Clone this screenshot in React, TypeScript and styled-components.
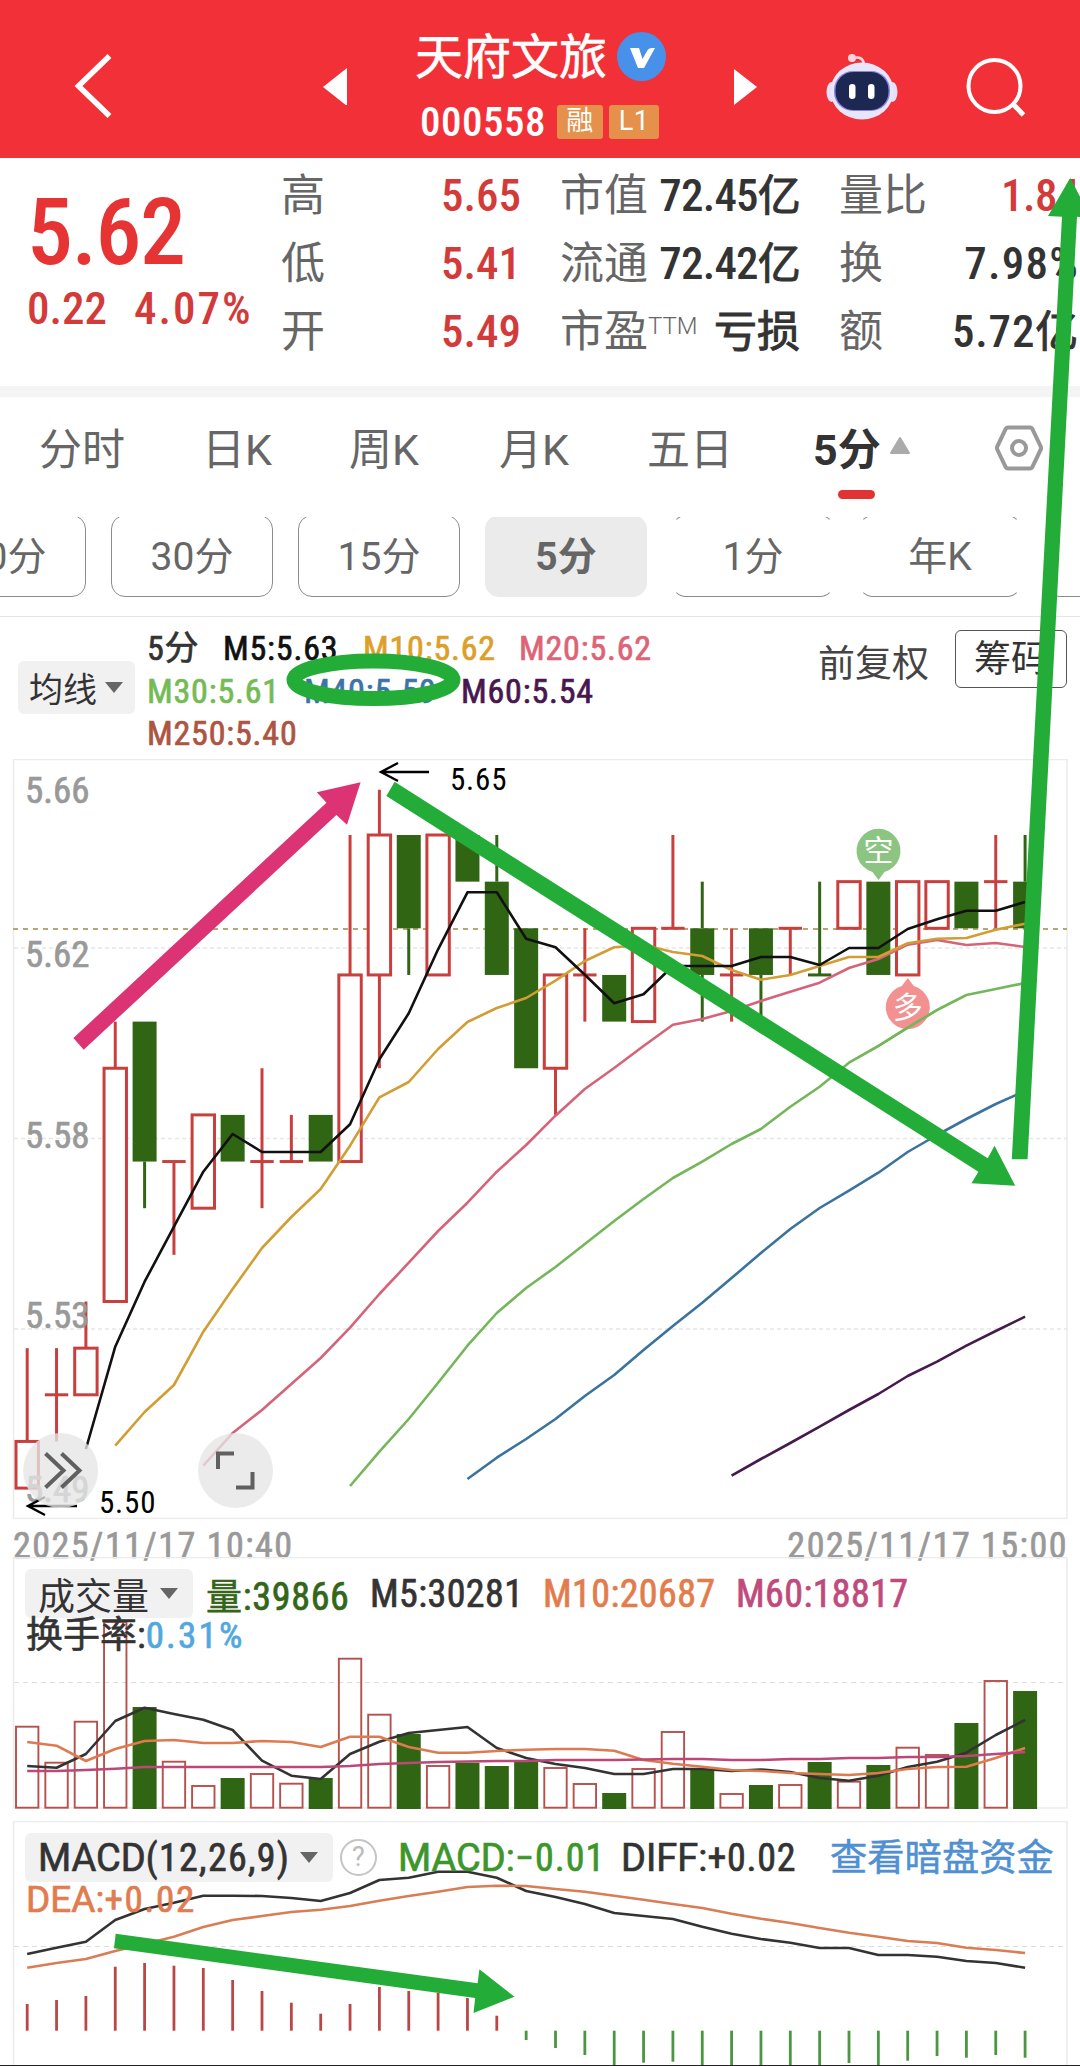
import type { ReactNode } from "react";
import styled, { createGlobalStyle } from "styled-components";

const STEP = 29.35;
const cx = (i: number) => 27.2 + i * STEP;
const level = (l: number) => 835 + l * 46.65;

const RED = "#c93f3d";
const GREEN = "#306514";

// [up, bodyTop, bodyBottom, high, low] in price ticks below 5.65
const candles: [number, number, number, number, number][] = [
  [1, 13, 14, 11, 14],
  [1, 12, 12, 11, 13],
  [1, 11, 12, 10, 12],
  [1, 5, 10, 4, 10],
  [0, 4, 7, 4, 8],
  [1, 7, 7, 7, 9],
  [1, 6, 8, 6, 8],
  [0, 6, 7, 6, 7],
  [1, 7, 7, 5, 8],
  [1, 7, 7, 6, 7],
  [0, 6, 7, 6, 7],
  [1, 3, 7, 0, 7],
  [1, 0, 3, -0.97, 5],
  [0, 0, 2, 0, 3],
  [1, 0, 3, 0, 3],
  [0, 0, 1, 0, 1],
  [0, 1, 3, 0, 3],
  [0, 2, 5, 2, 5],
  [1, 3, 5, 3, 6],
  [1, 3, 3, 2, 4],
  [0, 3, 4, 3, 4],
  [1, 2, 4, 2, 4],
  [1, 2, 2, 0, 2],
  [0, 2, 3, 1, 4],
  [1, 3, 3, 2, 4],
  [0, 2, 3, 2, 4],
  [1, 2, 2, 2, 3],
  [0, 3, 3, 1, 3],
  [1, 1, 2, 1, 2],
  [0, 1, 3, 1, 3],
  [1, 1, 3, 1, 3],
  [1, 1, 2, 1, 2],
  [0, 1, 2, 1, 2],
  [1, 1, 1, 0, 2],
  [0, 1, 2, 0, 2],
];

const ma5 = [1449, 1346.7, 1281.7, 1226.7, 1171.7, 1134, 1152, 1152, 1152, 1124.3, 1059.3, 1013.3, 949.3, 892.3, 892.3, 938.7, 947.3, 974.7, 1003.3, 994.3, 966, 966, 966, 957, 957, 965, 948, 948, 929, 919.3, 910.7, 910.7, 902];
const ma10 = [1445.7, 1412, 1385, 1331.7, 1289, 1248, 1217, 1189, 1145.7, 1097.3, 1082, 1049, 1022, 1008, 998, 980.7, 961, 947.3, 945, 952, 956, 970, 979.7, 975, 966, 957, 957, 943.3, 938.7, 938, 929.7, 923.7];
const ma20 = [1465.7, 1433, 1410, 1384, 1358, 1327.7, 1294, 1262.7, 1231, 1202.7, 1171.7, 1145, 1115.7, 1089, 1068, 1046, 1024.7, 1019, 1011, 1001, 991.7, 982.7, 968, 959, 944.7, 940, 945, 943, 947];
const ma30 = [1486, 1451.7, 1419, 1382.7, 1345.7, 1313, 1288, 1267, 1244, 1221, 1199, 1178, 1161.7, 1144, 1129, 1106.7, 1086.7, 1062.7, 1046, 1027.7, 1010, 995, 989, 983];
const ma40 = [1479, 1457.7, 1439, 1419, 1396, 1375, 1350, 1326, 1302.7, 1278, 1253, 1229, 1208, 1190.7, 1172.7, 1152, 1135, 1119, 1104, 1091];
const ma60 = [1475.7, 1459, 1443, 1426.7, 1410, 1394, 1376, 1361.7, 1345.7, 1331, 1316.7];

const volTop = [1726.7, 1762.7, 1721.7, 1622, 1707, 1761.7, 1786, 1778, 1774, 1783.7, 1778, 1658.7, 1714.7, 1734, 1766, 1762.7, 1766, 1762, 1768, 1784, 1793, 1769, 1732, 1770, 1794, 1785, 1785, 1762, 1781.7, 1765, 1747.7, 1755, 1723, 1681, 1691];
const vol5 = [1766, 1767.7, 1754, 1721, 1707.7, 1714, 1719.7, 1730, 1760.7, 1775.7, 1779, 1754, 1741.7, 1733, 1730, 1727, 1748, 1758, 1764, 1768, 1774, 1774, 1769, 1769, 1771, 1769.5, 1772, 1778, 1780.7, 1775.7, 1767, 1761.7, 1752.7, 1735, 1720];
const vol10 = [1742, 1745.7, 1761, 1749, 1741, 1740, 1743, 1743, 1741, 1742, 1747, 1736.7, 1736.7, 1747, 1752.7, 1752.7, 1751, 1749.7, 1749, 1749, 1750.7, 1760, 1763.7, 1766.7, 1770, 1771, 1773, 1774, 1775, 1773, 1769, 1767, 1766.7, 1758, 1748];
const vol60 = [1771, 1771, 1770, 1768.7, 1767, 1767, 1767, 1767, 1767, 1767, 1767, 1766, 1764, 1763, 1762, 1761.5, 1761, 1761, 1760, 1760, 1760, 1759.5, 1759, 1759, 1760, 1760, 1759, 1759, 1758, 1758, 1757, 1757, 1756, 1754, 1752];

const diff = [1954, 1947.7, 1941.7, 1920, 1909, 1902.7, 1895.7, 1895.7, 1896, 1898, 1901, 1893, 1880, 1877.7, 1871.7, 1871.7, 1877.7, 1891, 1897, 1904, 1913, 1916, 1919, 1926.7, 1933.7, 1939, 1942.7, 1948, 1948, 1955, 1955, 1956.7, 1961, 1963, 1967.7];
const dea = [1967.7, 1963, 1959, 1951, 1944, 1936.7, 1927, 1920, 1916, 1912, 1909.7, 1906, 1900.7, 1896, 1891.7, 1887, 1885.7, 1886, 1889, 1891.7, 1895.7, 1899.7, 1904, 1908, 1913.7, 1918.7, 1923, 1928, 1932.7, 1936.7, 1941, 1943, 1947.7, 1950, 1953];
const macd = [2004, 2000, 1996, 1966.7, 1963, 1965.7, 1968, 1980, 1991, 2002.7, 2013.7, 2004, 1987, 1991, 1993, 1998, 2015.7, 2040, 2048, 2055, 2065, 2062.7, 2061.7, 2066, 2066, 2066, 2066, 2066, 2063, 2066, 2060.7, 2056, 2057.7, 2055, 2057.7];

const Line = ({ data, color, from = 0, w = 2.6 }: { data: number[]; color: string; from?: number; w?: number }) => (
  <polyline
    points={data.map((y, i) => `${cx(i + from)},${y}`).join(" ")}
    fill="none"
    stroke={color}
    strokeWidth={w}
    strokeLinejoin="round"
  />
);

const Candle = ({ i }: { i: number }) => {
  const [up, top, bottom, high, low] = candles[i];
  const x = cx(i);
  const color = up ? RED : GREEN;
  const t = level(top);
  const b = level(bottom);
  return (
    <g>
      {high < top && <line x1={x} x2={x} y1={level(high)} y2={t} stroke={color} strokeWidth="3" />}
      {low > bottom && <line x1={x} x2={x} y1={b} y2={level(low)} stroke={color} strokeWidth="3" />}
      {top === bottom && <line x1={x - 11.7} x2={x + 11.7} y1={t} y2={t} stroke={color} strokeWidth="3" />}
      {top !== bottom && up === 1 && (
        <rect x={x - 11.2} y={t} width="22.4" height={b - t} fill="#fff" stroke={color} strokeWidth="3" />
      )}
      {top !== bottom && up === 0 && <rect x={x - 12} y={t} width="24" height={b - t} fill={color} />}
    </g>
  );
};

const PriceChart = () => (
  <Canvas $h={760} viewBox="0 759 1080 760">
    <rect x="13.5" y="759.5" width="1053.5" height="759" fill="none" stroke="#ebebeb" strokeWidth="1.5" />
    {[948, 1138.5, 1329].map((y) => (
      <line key={y} x1="14" x2="1067" y1={y} y2={y} stroke="#e6e6e6" strokeWidth="1.5" strokeDasharray="4 3" />
    ))}
    <line x1="13" x2="1067" y1="929" y2="929" stroke="#b9a678" strokeWidth="1.8" strokeDasharray="5 5" />
    {candles.map((_, i) => (
      <Candle key={i} i={i} />
    ))}
    <Line data={ma60} color="#471a4e" from={24} />
    <Line data={ma40} color="#3b739f" from={15} />
    <Line data={ma30} color="#74b65a" from={11} />
    <Line data={ma20} color="#d5647a" from={6} />
    <Line data={ma10} color="#d39d35" from={3} />
    <Line data={ma5} color="#111" from={2} />
    <AxisText x="25" y="803">5.66</AxisText>
    <AxisText x="25" y="967">5.62</AxisText>
    <AxisText x="25" y="1148">5.58</AxisText>
    <AxisText x="25" y="1328">5.53</AxisText>
    <AxisText x="25" y="1502">5.49</AxisText>
    <g stroke="#000" strokeWidth="2.4" fill="none">
      <path d="M429 772H381M398 763l-17 9 17 9" />
      <path d="M77 1506H28M45 1497l-17 9 17 9" />
    </g>
    <PeakText x="450" y="790">5.65</PeakText>
    <PeakText x="99" y="1513">5.50</PeakText>
    <path d="M878.5 880l-6-8a22 22 0 1 1 12 0z" fill="#8cc481" />
    <MarkText x="878.5" y="861">空</MarkText>
    <path d="M907.8 978l-6 8a22 22 0 1 0 12 0z" fill="#f39191" />
    <MarkText x="907.8" y="1018">多</MarkText>
    <Line data={ma30.slice(18, 21)} color="#74b65a" from={29} />
    <g fill="#e6e6e6" fillOpacity="0.78">
      <circle cx="60.6" cy="1470.5" r="37.5" />
      <circle cx="235.5" cy="1470.5" r="37.5" />
    </g>
    <g stroke="#606060" strokeWidth="4" fill="none">
      <path d="M45.5 1453.5l18 17-18 17M61.5 1453.5l18 17-18 17" />
      <path d="M218 1469v-15.500h16M252.500 1472v15.500h-16.500" />
    </g>
  </Canvas>
);

const VolumeChart = () => (
  <Canvas $h={252} viewBox="0 1557 1080 252">
    <rect x="13.5" y="1557.5" width="1053.5" height="250.5" fill="none" stroke="#ebebeb" strokeWidth="1.5" />
    <line x1="14" x2="1067" y1="1682.5" y2="1682.5" stroke="#dedede" strokeDasharray="5 4" />
    {volTop.map((y, i) =>
      candles[i][0] ? (
        <rect key={i} x={cx(i) - 11.2} y={y} width="22.4" height={1807.7 - y} fill="none" stroke="#b5504d" strokeWidth="1.9" />
      ) : (
        <rect key={i} x={cx(i) - 12} y={y} width="24" height={1809 - y} fill={GREEN} />
      )
    )}
    <Line data={vol5} color="#333" w={2.6} />
    <Line data={vol10} color="#de7a50" w={2.6} />
    <Line data={vol60} color="#bb4877" w={2.6} />
  </Canvas>
);

const MacdChart = () => (
  <Canvas $h={245} viewBox="0 1821 1080 245">
    <path d="M13.5 2066V1821.5H1067V2066" fill="none" stroke="#ebebeb" strokeWidth="1.5" />
    <line x1="14" x2="1067" y1="1946.5" y2="1946.5" stroke="#dcdcdc" strokeDasharray="5 4" />
    {macd.map((y, i) => (
      <line key={i} x1={cx(i)} x2={cx(i)} y1="2030.7" y2={y} stroke={i < 17 ? "#b94746" : "#4b9640"} strokeWidth="2.8" />
    ))}
    <Line data={diff} color="#333" w={2.6} />
    <Line data={dea} color="#d97d54" w={2.6} />
    <line x1="0" x2="1080" y1="2065.5" y2="2065.5" stroke="#222" />
  </Canvas>
);

const Robot = () => (
  <svg width="72" height="68" viewBox="0 0 72 68">
    <path d="M27 6c7-2 11 1 11 8" fill="none" stroke="#f9d9e6" strokeWidth="2.5" />
    <circle cx="26" cy="6" r="4" fill="#fbd5de" />
    <ellipse cx="5.5" cy="40" rx="5" ry="10" fill="#e6e0fb" />
    <ellipse cx="66.5" cy="40" rx="5" ry="10" fill="#e6e0fb" />
    <ellipse cx="36" cy="39" rx="31.5" ry="28.5" fill="#e9e5fb" />
    <rect x="8" y="19" width="56" height="40" rx="19" fill="#8b83e6" />
    <rect x="9.5" y="20" width="53" height="38" rx="18" fill="#1c2852" />
    <rect x="23" y="32" width="6.5" height="15" rx="3.2" fill="#fff" />
    <rect x="42" y="32" width="6.5" height="15" rx="3.2" fill="#fff" />
  </svg>
);

const Quote = ({ label, sup, children }: { label: string; sup?: string; children: ReactNode }) => (
  <QuoteRow>
    <span>
      {label}
      {sup && <Sup>{sup}</Sup>}
    </span>
    {children}
  </QuoteRow>
);

const App = () => {
  return (
    <Page>
      <GlobalStyle />
      <Header>
        <Slot $ml={73}>
          <svg width="42" height="64" viewBox="0 0 42 64" fill="none" stroke="#fff" strokeWidth="5.5">
            <path d="M36.5 2L5.500 32l31 30" />
          </svg>
        </Slot>
        <Slot $ml={207}>
          <svg width="26" height="38" viewBox="0 0 26 38">
            <path d="M1 20L25 1v38z" fill="#fff" />
          </svg>
        </Slot>
        <TitleBlock>
          <Name>
            天府文旅
            <Verified>
              <svg width="26" height="22" viewBox="0 0 26 22">
                <path d="M1 1h9l3.5 11L18 4q1.500-3 5-3h3L15 21H9z" fill="#fff" />
              </svg>
            </Verified>
          </Name>
          <Code>
            000558 <Tag $w={46}>融</Tag>
            <Tag $w={50}>L1</Tag>
          </Code>
        </TitleBlock>
        <Slot $ml={66}>
          <svg width="25" height="38" viewBox="0 0 25 38">
            <path d="M24 20L1 2v36z" fill="#fff" />
          </svg>
        </Slot>
        <Slot $ml={68}>
          <Robot />
        </Slot>
        <Slot $ml={67}>
          <svg width="62" height="62" viewBox="0 0 62 62" fill="none" stroke="#fff" strokeWidth="4">
            <circle cx="29.5" cy="31" r="26" />
            <path d="M47 48l11.500 12" strokeWidth="5" />
          </svg>
        </Slot>
      </Header>

      <Summary>
        <PriceBlock>
          <Price>5.62</Price>
          <Change>
            <span>0.22</span>
            <Percent>4.07%</Percent>
          </Change>
        </PriceBlock>
        <QuoteCol>
          <Quote label="高">
            <Value $c="#d33a3a">5.65</Value>
          </Quote>
          <Quote label="低">
            <Value $c="#d33a3a">5.41</Value>
          </Quote>
          <Quote label="开">
            <Value $c="#d33a3a">5.49</Value>
          </Quote>
        </QuoteCol>
        <QuoteCol>
          <Quote label="市值">
            <Value $ls={-0.8}>
              72.45<Cn>亿</Cn>
            </Value>
          </Quote>
          <Quote label="流通">
            <Value $ls={-0.8}>
              72.42<Cn>亿</Cn>
            </Value>
          </Quote>
          <Quote label="市盈" sup="TTM">
            <Value>
              <Cn>亏损</Cn>
            </Value>
          </Quote>
        </QuoteCol>
        <QuoteCol>
          <Quote label="量比">
            <Value $c="#d33a3a" $ls={-0.5}>1.84</Value>
          </Quote>
          <Quote label="换">
            <Value $ls={1.2}>7.98%</Value>
          </Quote>
          <Quote label="额">
            <Value $ls={0.8}>
              5.72<Cn>亿</Cn>
            </Value>
          </Quote>
        </QuoteCol>
      </Summary>

      <Tabs>
        <Tab $w={163}>分时</Tab>
        <Tab $w={147}>日K</Tab>
        <Tab $w={150}>周K</Tab>
        <Tab $w={148}>月K</Tab>
        <Tab $w={166}>五日</Tab>
        <Tab $w={182} $active>
          5分
          <svg width="22" height="19" viewBox="0 0 22 19">
            <path d="M11 2L20 17H2z" fill="#aaa" stroke="#aaa" strokeWidth="2" strokeLinejoin="round" />
          </svg>
        </Tab>
        <Gear width="48" height="48" viewBox="0 0 48 48" fill="none" stroke="#999" strokeWidth="4" strokeLinejoin="round">
          <path d="M13 3.500h22q1.500 0 2.200 1.200L45.500 22q1 2 0 4L37.200 43.300q-.7 1.200-2.200 1.200H13q-1.500 0-2.200-1.200L2.500 26q-1-2 0-4L10.800 4.700Q11.500 3.500 13 3.500z" />
          <circle cx="24" cy="24" r="7" />
        </Gear>
      </Tabs>

      <Periods>
        <Pill>60分</Pill>
        <Pill>30分</Pill>
        <Pill>15分</Pill>
        <Pill $active>5分</Pill>
        <Pill $open>1分</Pill>
        <Pill $open>年K</Pill>
        <Pill $open />
      </Periods>

      <Averages>
        <Select $w={117} $h={53}>
          <span>均线</span>
          <Caret />
        </Select>
        <AverageList>
          <AverageRow>
            <Avg $w={76} $c="#333">
              5分
            </Avg>
            <Avg $w={140} $c="#111">M5:5.63</Avg>
            <Avg $w={156} $c="#dc9f2b">M10:5.62</Avg>
            <Avg $w={140} $c="#dd6477">M20:5.62</Avg>
          </AverageRow>
          <AverageRow>
            <Avg $w={157} $c="#74bb55">M30:5.61</Avg>
            <Avg $w={157} $c="#3b74a6">M40:5.59</Avg>
            <Avg $w={140} $c="#481750">M60:5.54</Avg>
          </AverageRow>
          <AverageRow>
            <Avg $w={160} $c="#ad5442">M250:5.40</Avg>
          </AverageRow>
        </AverageList>
        <Adjust>前复权</Adjust>
        <Chips>筹码</Chips>
      </Averages>

      <PriceChart />
      <Dates>
        <span>2025/11/17 10:40</span>
        <span>2025/11/17 15:00</span>
      </Dates>

      <Panel $h={264}>
        <VolumeChart />
        <Legend>
          <LegendRow>
            <Select $w={168} $h={49} $big>
              <span>成交量</span>
              <Caret />
            </Select>
            <Stat $ml={13} $w={164} $c="#336618" $ls={0.7}>
              <Cn>量</Cn>:39866
            </Stat>
            <Stat $w={173} $c="#333">M5:30281</Stat>
            <Stat $w={193} $c="#e37c4c">M10:20687</Stat>
            <Stat $w={180} $c="#c04a7c">M60:18817</Stat>
          </LegendRow>
          <LegendLine>
            <Cn>换手率</Cn>:<Turnover>0.31%</Turnover>
          </LegendLine>
        </Legend>
      </Panel>

      <Panel $h={245}>
        <MacdChart />
        <Legend>
          <LegendRow>
            <Select $w={308} $h={49} $big>
              <Stat $c="#333" $ls={1.3}>
                <Wide>MACD</Wide>(12,26,9)
              </Stat>
              <Caret />
            </Select>
            <Help>?</Help>
            <Stat $ml={21} $w={223} $c="#3d962c" $ls={1}>
              <Wide>MACD:</Wide>−0.01
            </Stat>
            <Stat $w={209} $c="#333" $ls={0.7}>
              <Wide>DIFF:</Wide>+0.02
            </Stat>
            <FundLink>查看暗盘资金</FundLink>
          </LegendRow>
          <LegendLine $c="#e07c50" $ls={1.7}>
            <Wide>DEA:</Wide>+0.02
          </LegendLine>
        </Legend>
      </Panel>

      <Overlay viewBox="0 0 1080 2066">
        <ellipse cx="373.5" cy="679.8" rx="79.5" ry="18.8" fill="none" stroke="#23ac38" strokeWidth="15" />
        <polygon points="73.4,1038 326.5,802.7 316.8,792.3 360.6,782.3 347,824.7 336.4,815 83.7,1049.7" fill="#db3374" />
        <g fill="#23ac38">
          <polygon points="394.6,781.7 987.7,1158.3 994.6,1145.7 1015.2,1185.7 971.5,1183.3 978.4,1171.7 386.4,796" />
          <polygon points="1011.8,1159.3 1062,216.7 1048,216 1070.3,178 1091,218 1077,216.7 1027.6,1159.3" />
          <polygon points="115.7,1933.7 477.6,1983.3 479.4,1969.3 514.5,1996.7 473.5,2013 475.2,1998 114,1948.3" />
        </g>
      </Overlay>
    </Page>
  );
};

export default App;

const GlobalStyle = createGlobalStyle`
  body {
    margin: 0;
    background: #fff;
  }
  * {
    box-sizing: border-box;
  }
  svg {
    display: block;
    flex-shrink: 0;
  }
`;

const Page = styled.div`
  position: relative;
  width: 1080px;
  height: 2066px;
  overflow: hidden;
  background: #fff;
  font-family: "Roboto Condensed", "Noto Sans CJK SC", sans-serif;
  color: #333;
  white-space: nowrap;
`;

const Canvas = styled.svg<{ $h: number }>`
  width: 1080px;
  height: ${({ $h }) => $h}px;
  grid-area: 1 / 1;
`;

const AxisText = styled.text`
  font-size: 37px;
  fill: #999;
  stroke: #999;
  stroke-width: 0.7px;
`;

const PeakText = styled.text`
  font-size: 31px;
  letter-spacing: 0.8px;
  fill: #000;
`;

const MarkText = styled.text`
  font-size: 30px;
  fill: #fff;
  text-anchor: middle;
`;

const Overlay = styled.svg`
  position: absolute;
  inset: 0;
  width: 1080px;
  height: 2066px;
  pointer-events: none;
`;

const Cn = styled.span`
  font-weight: 400;
  -webkit-text-stroke: 0.6px currentColor;
`;

const Wide = styled.span`
  font-family: Roboto, sans-serif;
  letter-spacing: 0;
`;

const Header = styled.header`
  height: 158px;
  padding-top: 13px;
  display: flex;
  align-items: center;
  background: #f23038;
  color: #fff;
`;

const Slot = styled.div<{ $ml: number }>`
  margin-left: ${({ $ml }) => $ml}px;
`;

const TitleBlock = styled.div`
  width: 252px;
  margin-left: 67px;
  display: flex;
  flex-direction: column;
  gap: 23px;
`;

const Name = styled.div`
  display: flex;
  align-items: center;
  height: 50px;
  font-size: 48px;
  line-height: 50px;
  padding-top: 2px;
  -webkit-text-stroke: 0.6px #fff;
`;

const Verified = styled.div`
  width: 49px;
  height: 49px;
  margin: -4px 0 0 10px;
  padding-top: 3px;
  border-radius: 50%;
  background: #4791ea;
  display: flex;
  align-items: center;
  justify-content: center;
`;

const Code = styled.div`
  display: flex;
  align-items: center;
  height: 34px;
  padding-left: 5px;
  font-size: 41px;
  line-height: 38px;
  font-weight: 500;
  letter-spacing: 0.5px;
`;

const Tag = styled.span<{ $w: number }>`
  width: ${({ $w }) => $w}px;
  height: 34px;
  margin-left: ${({ $w }) => ($w > 48 ? 6 : 11)}px;
  border-radius: 3px;
  background: #e5914b;
  font-family: Roboto, "Noto Sans CJK SC", sans-serif;
  font-size: 27px;
  font-weight: 400;
  line-height: 33px;
  text-align: center;
`;

const Summary = styled.section`
  display: flex;
  height: 239px;
  border-bottom: 11px solid #f4f4f4;
`;

const PriceBlock = styled.div`
  width: 242px;
  padding: 30px 0 0 27px;
`;

const Price = styled.div`
  font-size: 92px;
  line-height: 90px;
  font-weight: 500;
  letter-spacing: -1.5px;
  color: #e63333;
`;

const Change = styled.div`
  display: flex;
  gap: 27px;
  margin-top: 3px;
  font-size: 45px;
  line-height: 56px;
  font-weight: 500;
  color: #d33a3a;
`;

const Percent = styled.span`
  letter-spacing: 2px;
`;

const QuoteCol = styled.div`
  width: 240px;
  flex-shrink: 0;
  margin-left: 39px;
  padding-top: 4px;
`;

const QuoteRow = styled.div`
  display: flex;
  justify-content: space-between;
  font-size: 44px;
  line-height: 68px;
  height: 68px;
  color: #666;
`;

const Sup = styled.span`
  position: relative;
  top: -13px;
  font-family: Roboto, sans-serif;
  font-size: 24px;
  font-weight: 300;
`;

const Value = styled.span<{ $c?: string; $ls?: number }>`
  font-size: 45px;
  font-weight: 500;
  letter-spacing: ${({ $ls }) => $ls || 0}px;
  color: ${({ $c }) => $c || "#333"};

  ${Cn} {
    font-size: 43px;
    -webkit-text-stroke-width: 1px;
  }
`;

const Tabs = styled.nav`
  display: flex;
  align-items: center;
  height: 120px;
  padding: 0 0 23px 39px;
`;

const Tab = styled.div<{ $w: number; $active?: boolean }>`
  position: relative;
  display: flex;
  align-items: center;
  gap: 8px;
  width: ${({ $w }) => $w}px;
  font-family: Roboto, "Noto Sans CJK SC", sans-serif;
  font-size: 43px;
  font-weight: ${({ $active }) => ($active ? 700 : 400)};
  color: ${({ $active }) => ($active ? "#333" : "#666")};

  &::after {
    content: "";
    display: ${({ $active }) => ($active ? "block" : "none")};
    position: absolute;
    left: 25px;
    bottom: -22px;
    width: 37px;
    height: 9px;
    border-radius: 5px;
    background: #e03434;
  }
`;

const Gear = styled.svg`
  margin-top: 4px;
`;

const Periods = styled.div`
  display: flex;
  gap: 25px;
  height: 80px;
  margin-left: -76px;
  overflow: hidden;
`;

const Pill = styled.div<{ $active?: boolean; $open?: boolean }>`
  flex: 0 0 162px;
  height: 82px;
  margin-top: -2px;
  border: 1.5px solid ${({ $active }) => ($active ? "#ebebeb" : "#8c8c8c")};
  ${({ $open }) => $open && "border-left-color: transparent; border-right-color: transparent;"}
  border-radius: 14px;
  background: ${({ $active }) => ($active ? "#ebebeb" : "#fff")};
  font-family: Roboto, "Noto Sans CJK SC", sans-serif;
  font-size: 39px;
  font-weight: ${({ $active }) => ($active ? 700 : 400)};
  line-height: 83px;
  text-align: center;
  color: #666;
`;

const Averages = styled.div`
  display: flex;
  align-items: flex-start;
  height: 143px;
  margin-top: 19px;
  padding-left: 18px;
  border-top: 1px solid #e5e5e5;

  & > :first-child {
    margin-top: 44px;
  }
`;

const Select = styled.div<{ $w: number; $h: number; $big?: boolean }>`
  display: flex;
  align-items: center;
  justify-content: space-between;
  flex-shrink: 0;
  width: ${({ $w }) => $w}px;
  height: ${({ $h }) => $h}px;
  padding: ${({ $big }) => ($big ? "0 15px 0 13px" : "0 12px 0 11px")};
  border-radius: 6px;
  background: #f1f1f1;
  font-size: ${({ $big }) => ($big ? 37 : 34)}px;
`;

const Caret = styled.i`
  border: 9px solid transparent;
  border-top: 11px solid #666;
  border-bottom: 0;
`;

const AverageList = styled.div`
  width: 671px;
  margin-left: 12px;
  padding-top: 10px;
`;

const AverageRow = styled.div`
  display: flex;
  height: 42.5px;
  line-height: 42.5px;
`;

const Avg = styled.span<{ $w: number; $c: string }>`
  width: ${({ $w }) => $w}px;
  font-size: 34px;
  letter-spacing: 0.8px;
  -webkit-text-stroke: 0.7px currentColor;
  color: ${({ $c }) => $c};
`;

const Adjust = styled.div`
  margin-top: 20px;
  font-size: 37px;
  line-height: 56px;
  color: #444;
`;

const Chips = styled.div`
  width: 112px;
  height: 58px;
  margin: 13px 0 0 26px;
  padding-left: 18px;
  border: 1px solid #555;
  border-radius: 6px;
  font-size: 37px;
  line-height: 58px;
`;

const Dates = styled.div`
  display: flex;
  justify-content: space-between;
  height: 38px;
  padding: 0 12px 0 13px;
  font-size: 36px;
  line-height: 55px;
  letter-spacing: 1.5px;
  -webkit-text-stroke: 0.7px currentColor;
  color: #999;
`;

const Panel = styled.section<{ $h: number }>`
  display: grid;
  align-items: start;
  height: ${({ $h }) => $h}px;
`;

const Legend = styled.div`
  grid-area: 1 / 1;
  padding: 12px 0 0 25px;
`;

const LegendRow = styled.div`
  display: flex;
  align-items: center;
  height: 49px;
`;

const Stat = styled.span<{ $c: string; $w?: number; $ml?: number; $ls?: number }>`
  ${({ $w }) => $w && `width: ${$w}px;`}
  flex-shrink: 0;
  margin-left: ${({ $ml }) => $ml || 0}px;
  font-size: 38px;
  letter-spacing: ${({ $ls }) => $ls || 0.4}px;
  -webkit-text-stroke: 0.7px currentColor;
  color: ${({ $c }) => $c};

  ${Cn} {
    font-size: 36px;
  }
`;

const LegendLine = styled.div<{ $c?: string; $ls?: number }>`
  padding: 1px 0 0 1px;
  font-size: 37px;
  line-height: 34px;
  letter-spacing: ${({ $ls }) => $ls || 0}px;
  -webkit-text-stroke: 0.7px currentColor;
  color: ${({ $c }) => $c || "#333"};
`;

const Turnover = styled.span`
  letter-spacing: 2.2px;
  color: #52a8dd;
`;

const Help = styled.div`
  width: 37px;
  height: 37px;
  margin-left: 7px;
  border: 2.5px solid #c4c4c4;
  border-radius: 50%;
  font-family: Roboto, sans-serif;
  font-size: 27px;
  line-height: 32px;
  text-align: center;
  color: #bbb;
`;

const FundLink = styled.span`
  font-size: 37.3px;
  line-height: 46px;
  color: #5090d2;
  -webkit-text-stroke: 0.5px currentColor;
`;
